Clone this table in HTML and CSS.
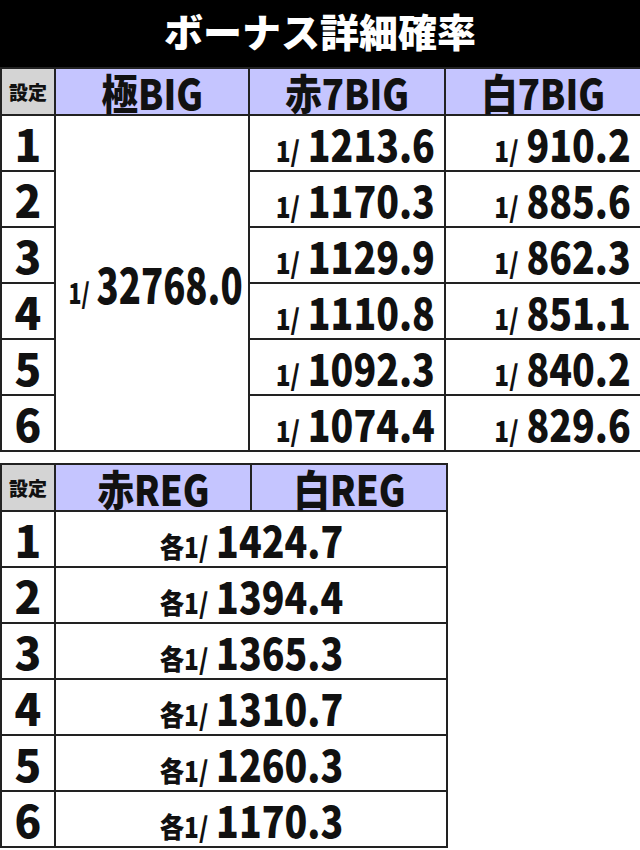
FILE: index.html
```html
<!DOCTYPE html>
<html lang="ja">
<head>
<meta charset="utf-8">
<link rel="stylesheet" href="styles.css">
</head>
<body>
<div class="title">ボーナス詳細確率</div>
<table class="t t1">
  <colgroup><col class="c0"><col class="c1"><col class="c2"><col class="c3"></colgroup>
  <thead>
    <tr class="hr"><th class="set">設定</th><th><span class="in">極BIG</span></th><th><span class="in">赤7BIG</span></th><th><span class="in">白7BIG</span></th></tr>
  </thead>
  <tbody>
    <tr><td class="n">1</td><td class="merged" rowspan="6"><div class="cc"><span class="in wide"><span class="p">1/</span><span class="v big">32768.0</span></span></div></td><td class="val"><span class="in"><span class="p">1/</span><span class="v">1213.6</span></span></td><td class="val"><span class="in"><span class="p">1/</span><span class="v">910.2</span></span></td></tr>
    <tr><td class="n">2</td><td class="val"><span class="in"><span class="p">1/</span><span class="v">1170.3</span></span></td><td class="val"><span class="in"><span class="p">1/</span><span class="v">885.6</span></span></td></tr>
    <tr><td class="n">3</td><td class="val"><span class="in"><span class="p">1/</span><span class="v">1129.9</span></span></td><td class="val"><span class="in"><span class="p">1/</span><span class="v">862.3</span></span></td></tr>
    <tr><td class="n">4</td><td class="val"><span class="in"><span class="p">1/</span><span class="v">1110.8</span></span></td><td class="val"><span class="in"><span class="p">1/</span><span class="v">851.1</span></span></td></tr>
    <tr><td class="n">5</td><td class="val"><span class="in"><span class="p">1/</span><span class="v">1092.3</span></span></td><td class="val"><span class="in"><span class="p">1/</span><span class="v">840.2</span></span></td></tr>
    <tr><td class="n">6</td><td class="val"><span class="in"><span class="p">1/</span><span class="v">1074.4</span></span></td><td class="val"><span class="in"><span class="p">1/</span><span class="v">829.6</span></span></td></tr>
  </tbody>
</table>
<table class="t t2">
  <colgroup><col class="c0"><col class="c2"><col class="c2"></colgroup>
  <thead>
    <tr class="hr"><th class="set">設定</th><th><span class="in">赤REG</span></th><th><span class="in">白REG</span></th></tr>
  </thead>
  <tbody>
    <tr><td class="n">1</td><td class="both" colspan="2"><span class="in"><span class="p">各1/</span><span class="v">1424.7</span></span></td></tr>
    <tr><td class="n">2</td><td class="both" colspan="2"><span class="in"><span class="p">各1/</span><span class="v">1394.4</span></span></td></tr>
    <tr><td class="n">3</td><td class="both" colspan="2"><span class="in"><span class="p">各1/</span><span class="v">1365.3</span></span></td></tr>
    <tr><td class="n">4</td><td class="both" colspan="2"><span class="in"><span class="p">各1/</span><span class="v">1310.7</span></span></td></tr>
    <tr><td class="n">5</td><td class="both" colspan="2"><span class="in"><span class="p">各1/</span><span class="v">1260.3</span></span></td></tr>
    <tr><td class="n">6</td><td class="both" colspan="2"><span class="in"><span class="p">各1/</span><span class="v">1170.3</span></span></td></tr>
  </tbody>
</table>
</body>
</html>
```
FILE: styles.css
```css
html, body {
  margin: 0;
  padding: 0;
  background: #fff;
}
body {
  width: 640px;
  height: 850px;
  overflow: hidden;
  font-family: "Noto Sans CJK JP", "Noto Sans", sans-serif;
  font-weight: 900;
  color: #111;
}
.title {
  height: 67px;
  background: #000;
  color: #fff;
  font-size: 39px;
  line-height: 60px;
  text-align: center;
}
.t {
  border-collapse: collapse;
  table-layout: fixed;
}
.t1 { width: 640px; }
.t2 { width: 446px; margin-top: 11px; }
.c0 { width: 54px; }
.c1 { width: 194px; }
.c2 { width: 196px; }
.c3 { width: 196px; }
th, td {
  border: 2px solid #222;
  padding: 0;
  line-height: 1;
  white-space: nowrap;
  font-weight: 900;
}
.hr { height: 47px; }
tbody tr { height: 56px; }
thead th {
  background: #c5c5ff;
  font-size: 42px;
  vertical-align: middle;
  text-align: center;
}
thead th.set {
  background: #d4d4d4;
  font-size: 19px;
}
.in {
  display: inline-block;
  transform: scaleX(0.87);
  transform-origin: center center;
}
.n {
  font-size: 44px;
  text-align: center;
}
.val {
  text-align: right;
  padding-right: 9px;
}
.val .in {
  transform-origin: right center;
}
.merged, .both {
  text-align: center;
}
.cc {
  display: flex;
  justify-content: center;
  padding-left: 8px;
}
.p {
  font-size: 28px;
  margin-right: 9px;
}
.v {
  font-size: 43px;
}
.wide {
  transform: scaleX(0.76);
}
.big {
  font-size: 48px;
}
```
